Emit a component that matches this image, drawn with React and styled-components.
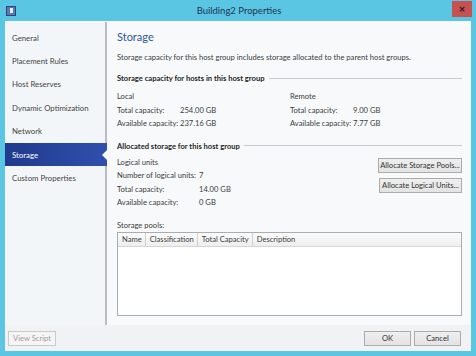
import React from 'react';
import styled, { createGlobalStyle } from 'styled-components';

const GlobalStyle = createGlobalStyle`
  html, body {
    margin: 0;
    padding: 0;
    background: #5bc6e4;
  }
  body {
    font-family: Lato, "Open Sans", sans-serif;
    font-size: 7.6px;
    color: #3c3c3c;
  }
`;

const navItems = [
  'General',
  'Placement Rules',
  'Host Reserves',
  'Dynamic Optimization',
  'Network',
  'Storage',
  'Custom Properties',
];

const App = () => {
  return (
    <>
      <GlobalStyle />
      <Window>
        <TitleBar>
          <AppIcon><IconMark /></AppIcon>
          <Title>Building2 Properties</Title>
          <CloseButton>×</CloseButton>
        </TitleBar>
        <Body>
          <Main>
            <Sidebar>
              {navItems.map(item => (
                <NavItem key={item} $active={item === 'Storage'}>
                  {item}
                </NavItem>
              ))}
            </Sidebar>
            <Content>
              <Heading>Storage</Heading>
              <Description>
                Storage capacity for this host group includes storage allocated to the parent host groups.
              </Description>

              <SectionTitle $gap={7}>Storage capacity for hosts in this host group</SectionTitle>
              <Columns>
                <InfoBlock $width="173px">
                  <Line>Local</Line>
                  <Row><Label>Total capacity:</Label><span>254.00 GB</span></Row>
                  <Row><Label>Available capacity:</Label><span>237.16 GB</span></Row>
                </InfoBlock>
                <InfoBlock>
                  <Line>Remote</Line>
                  <Row><Label>Total capacity:</Label><span>9.00 GB</span></Row>
                  <Row><Label>Available capacity:</Label><span>7.77 GB</span></Row>
                </InfoBlock>
              </Columns>

              <SectionTitle $gap={8}>Allocated storage for this host group</SectionTitle>
              <AllocRow>
                <InfoBlock>
                  <Line>Logical units</Line>
                  <Row><Label $width="82px">Number of logical units:</Label><span>7</span></Row>
                  <Row><Label $width="82px">Total capacity:</Label><span>14.00 GB</span></Row>
                  <Row><Label $width="82px">Available capacity:</Label><span>0 GB</span></Row>
                </InfoBlock>
                <ButtonStack>
                  <Button $width="84px">Allocate Storage Pools...</Button>
                  <Button $width="83px">Allocate Logical Units...</Button>
                </ButtonStack>
              </AllocRow>

              <PoolsLabel>Storage pools:</PoolsLabel>
              <Table>
                <HeaderRow>
                  <HeaderCell>Name</HeaderCell>
                  <HeaderCell>Classification</HeaderCell>
                  <HeaderCell>Total Capacity</HeaderCell>
                  <HeaderCell $last>Description</HeaderCell>
                </HeaderRow>
              </Table>
            </Content>
          </Main>
          <Footer>
            <Button $disabled $width="48px">View Script</Button>
            <FooterRight>
              <Button $width="47px">OK</Button>
              <Button $width="47px">Cancel</Button>
            </FooterRight>
          </Footer>
        </Body>
      </Window>
    </>
  );
};

export default App;

// Outer window frame with the cyan border
const Window = styled.div`
  width: 476px;
  height: 356px;
  box-sizing: border-box;
  padding: 0 5px 5px 5px;
  display: flex;
  flex-direction: column;
  background: #5bc6e4;
`;

const TitleBar = styled.div`
  height: 21px;
  display: flex;
  align-items: center;
`;

const AppIcon = styled.div`
  width: 10px;
  height: 10px;
  margin-left: 1px;
  background: #5a78b8;
  border: 1px solid #2f4478;
  box-sizing: border-box;
  display: flex;
  align-items: center;
  justify-content: center;
`;

const IconMark = styled.div`
  width: 3px;
  height: 5px;
  background: #e8eef8;
`;

const Title = styled.div`
  flex: 1;
  text-align: center;
  font-size: 9.5px;
  color: #1d3550;
  padding-left: 10px;
`;

const CloseButton = styled.div`
  width: 20px;
  height: 16px;
  margin-top: -4px;
  margin-right: -1px;
  background: #c75050;
  color: #2a1a1a;
  font-weight: bold;
  font-size: 11px;
  line-height: 15px;
  text-align: center;
`;

const Body = styled.div`
  flex: 1;
  display: flex;
  flex-direction: column;
  background: #f7f9fb;
`;

const Main = styled.div`
  flex: 1;
  display: flex;
`;

const Sidebar = styled.div`
  width: 100px;
  padding-top: 4px;
  margin-top: 1px;
  background: #f3f6f9;
  border-right: 2px solid #b9bdc3;
  display: flex;
  flex-direction: column;
`;

const NavItem = styled.div`
  height: 23.4px;
  display: flex;
  align-items: center;
  padding-left: 7px;
  margin-right: -2px;
  position: relative;
  font-size: 7.8px;
  color: ${p => (p.$active ? '#ffffff' : '#444')};
  background: ${p => (p.$active ? 'linear-gradient(90deg, #203a8c, #3050ae)' : 'transparent')};

  ${p =>
    p.$active &&
    `
    &::after {
      content: '';
      position: absolute;
      right: 0;
      top: 50%;
      margin-top: -5px;
      border-top: 5px solid transparent;
      border-bottom: 5px solid transparent;
      border-right: 5px solid #f7f9fb;
    }
  `}
`;

const Content = styled.div`
  flex: 1;
  padding: 7px 9px 0 10px;
  display: flex;
  flex-direction: column;
`;

const Heading = styled.div`
  font-size: 11px;
  line-height: 18px;
  height: 18px;
  color: #2c5894;
`;

const Description = styled.div`
  margin-top: 5px;
  height: 13px;
  line-height: 13px;
  white-space: nowrap;
`;

const SectionTitle = styled.div`
  margin-top: ${p => p.$gap}px;
  height: 14px;
  display: flex;
  align-items: center;
  font-weight: bold;
  color: #1e1e1e;
  white-space: nowrap;

  &::after {
    content: '';
    flex: 1;
    height: 1px;
    background: #c6cacf;
    margin-left: 4px;
  }
`;

const Columns = styled.div`
  margin-top: 5px;
  display: flex;
`;

const InfoBlock = styled.div`
  width: ${p => p.$width || 'auto'};
  flex-shrink: 0;
  display: flex;
  flex-direction: column;
`;

const Line = styled.div`
  height: 13.5px;
  line-height: 13.5px;
`;

const Row = styled.div`
  display: flex;
  height: 13.5px;
  line-height: 13.5px;
  white-space: nowrap;
`;

const Label = styled.div`
  min-width: ${p => p.$width || '63px'};
  flex-shrink: 0;
`;

const AllocRow = styled.div`
  margin-top: 3px;
  display: flex;
  justify-content: space-between;
`;

const ButtonStack = styled.div`
  display: flex;
  flex-direction: column;
  align-items: flex-end;
  gap: 5px;
  padding-top: 2px;
`;

const Button = styled.div`
  box-sizing: border-box;
  height: 15px;
  width: ${p => p.$width || 'auto'};
  display: flex;
  align-items: center;
  justify-content: center;
  white-space: nowrap;
  background: ${p => (p.$disabled ? '#f5f5f5' : 'linear-gradient(#efefef, #e3e3e3)')};
  border: 1px solid ${p => (p.$disabled ? '#cacaca' : '#acacac')};
  color: ${p => (p.$disabled ? '#9c9c9c' : '#333')};
`;

const PoolsLabel = styled.div`
  margin-top: 9px;
  height: 12px;
  line-height: 12px;
`;

const Table = styled.div`
  height: 84px;
  box-sizing: border-box;
  margin-top: 1px;
  background: #fff;
  border: 1px solid #a9adb2;
`;

const HeaderRow = styled.div`
  display: flex;
  height: 13px;
  background: linear-gradient(#fbfbfb, #eeeeee);
  border-bottom: 1px solid #d6d6d6;
`;

const HeaderCell = styled.div`
  padding: 0 3px 0 4px;
  display: flex;
  align-items: center;
  border-right: ${p => (p.$last ? 'none' : '1px solid #cfcfcf')};
`;

const Footer = styled.div`
  height: 26px;
  display: flex;
  align-items: center;
  justify-content: space-between;
  padding: 0 10px 0 3px;
  background: #f0f2f4;
`;

const FooterRight = styled.div`
  display: flex;
  gap: 3px;
`;
